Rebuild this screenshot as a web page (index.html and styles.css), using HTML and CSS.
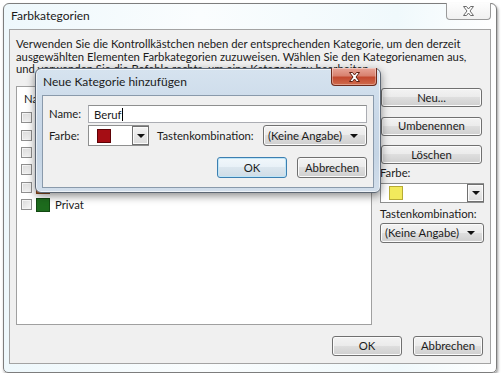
FILE: index.html
```html
<!DOCTYPE html>
<html lang="de">
<head>
    <meta charset="UTF-8">
    <title>Farbkategorien</title>
    <link rel="stylesheet" href="styles.css">
</head>
<body>
    <div class="win">
        <div class="titlebar">
            <span class="title">Farbkategorien</span>
            <div class="close-outer">
                <svg width="11" height="10" viewBox="0 0 11 10"><path d="M0.5 0.5h3l2 2.5 2-2.5h3l-3.5 4.5 3.5 4.5h-3l-2-2.5-2 2.5h-3l3.5-4.5z" fill="#fff" stroke="#6a6a6a" stroke-width="1"/></svg>
            </div>
        </div>

        <div class="client">
            <p class="intro">Verwenden Sie die Kontrollkästchen neben der entsprechenden Kategorie, um den derzeit<br>ausgewählten Elementen Farbkategorien zuzuweisen. Wählen Sie den Kategorienamen aus,<br>und verwenden Sie die Befehle rechts, um eine Kategorie zu bearbeiten.</p>

            <div class="main">
                <div class="list">
                    <div class="list-head">Name</div>
                    <!-- rows under the dialog: only their check boxes show -->
                    <div class="row"><span class="check"></span><span class="swatch blue"></span></div>
                    <div class="row"><span class="check"></span><span class="swatch yellow"></span></div>
                    <div class="row"><span class="check"></span><span class="swatch green"></span></div>
                    <div class="row"><span class="check"></span><span class="swatch purple"></span></div>
                    <div class="row"><span class="check"></span><span class="swatch orange"></span></div>
                    <div class="row"><span class="check"></span><span class="swatch green"></span>Privat</div>
                </div>

                <div class="side">
                    <div class="btn side-btn">Neu...</div>
                    <div class="btn side-btn">Umbenennen</div>
                    <div class="btn side-btn">Löschen</div>
                    <div class="side-label">Farbe:</div>
                    <div class="color-combo wide">
                        <span class="swatch yellow"></span>
                        <span class="drop"><i class="arrow"></i></span>
                    </div>
                    <div class="side-label">Tastenkombination:</div>
                    <div class="btn select wide">(Keine Angabe)<i class="arrow"></i></div>
                </div>
            </div>

            <div class="foot">
                <div class="btn foot-btn">OK</div>
                <div class="btn foot-btn">Abbrechen</div>
            </div>
        </div>

        <!-- modal dialog over the main window -->
        <div class="dialog">
            <div class="dlg-titlebar">
                <span class="title">Neue Kategorie hinzufügen</span>
                <div class="close-red">
                    <svg width="11" height="10" viewBox="0 0 11 10"><path d="M0.5 0.5h3l2 2.5 2-2.5h3l-3.5 4.5 3.5 4.5h-3l-2-2.5-2 2.5h-3l3.5-4.5z" fill="#fff" stroke="#5b1d10" stroke-width="1"/></svg>
                </div>
            </div>
            <div class="panel">
                <div class="field-row first">
                    <span class="lbl">Name:</span>
                    <div class="input">Beruf<span class="caret"></span></div>
                </div>
                <div class="field-row">
                    <span class="lbl">Farbe:</span>
                    <div class="color-combo small">
                        <span class="swatch red"></span>
                        <span class="drop"><i class="arrow"></i></span>
                    </div>
                    <span class="lbl key-lbl">Tastenkombination:</span>
                    <div class="btn select key-select">(Keine Angabe)<i class="arrow"></i></div>
                </div>
                <div class="dlg-buttons">
                    <div class="btn dlg-btn default">OK</div>
                    <div class="btn dlg-btn">Abbrechen</div>
                </div>
            </div>
        </div>
    </div>
</body>
</html>
```

FILE: styles.css
```css
* { margin: 0; padding: 0; box-sizing: border-box; }
body {
    font-family: "Lato", "Segoe UI", sans-serif;
    font-size: 11.3px;
    color: #1b1b1b;
    background: #fff;
}
.win {
    position: relative;
    margin: 3px 0 0 3px;
    width: 494px;
    height: 370px;
    border: 1px solid #7d7d7d;
    border-radius: 6px 6px 5px 5px;
    background: linear-gradient(to right, #eef8fc, #fafdfe 40%, #f0f9fc 80%, #fff);
    padding: 0 5px 8px 5px;
    display: flex;
    flex-direction: column;
    box-shadow: 1px 2px 3px rgba(0,0,0,0.4);
}
.titlebar {
    height: 25px;
    display: flex;
    justify-content: space-between;
    align-items: flex-start;
}
.titlebar .title {
    padding: 5px 0 0 2px;
    line-height: 14px;
    font-size: 12px;
}
.close-outer {
    width: 45px;
    height: 17px;
    margin-top: -1px;
    border: 1px solid #9a9a9a;
    border-top: none;
    border-radius: 0 0 4px 4px;
    background: linear-gradient(#fdfdfd, #f1f1f1);
    display: flex;
    align-items: center;
    justify-content: center;
}
.client {
    flex: 1;
    border: 1px solid #a3a3a3;
    background: #f0f0f0;
    padding: 8px 6px 6px 6px;
    display: flex;
    flex-direction: column;
}
.intro {
    line-height: 12.5px;
    white-space: nowrap;
}
.main {
    display: flex;
    gap: 8px;
    margin-top: 10.5px;
    height: 239px;
}
.list {
    width: 356px;
    border: 1px solid #a0a0a0;
    background: #fff;
}
.list-head {
    height: 22px;
    padding: 5px 0 0 7px;
    line-height: 14px;
}
.row {
    height: 17.4px;
    display: flex;
    align-items: center;
    padding-left: 4px;
    line-height: 14px;
}
.check {
    width: 11px;
    height: 11px;
    border: 1px solid #8f8f8f;
    background: linear-gradient(135deg, #d8d8d8, #f8f8f8);
    box-shadow: inset 0 0 0 1px #f4f4f4;
    margin-right: 4px;
}
.swatch {
    width: 14px;
    height: 14px;
    margin-right: 5px;
    border: 1px solid rgba(0,0,0,0.25);
}
.blue { background: #4a7fd0; }
.yellow { background: #f2ea5c; border-color: #b7ab35; }
.green { background: #1d6b1d; border-color: #124812; }
.purple { background: #7a4fb0; }
.orange { background: #b5622a; }
.red { background: #a50d14; border-color: #5e0206; }

.side {
    width: 104px;
    padding-top: 2px;
    display: flex;
    flex-direction: column;
}
.btn {
    border: 1px solid #707070;
    border-radius: 3px;
    background: linear-gradient(#f3f3f3 0%, #ebebeb 49%, #dedede 50%, #cfcfcf 100%);
    box-shadow: inset 0 0 0 1px #fbfbfb;
    display: flex;
    align-items: center;
    justify-content: center;
    line-height: 14px;
}
.side-btn {
    height: 19px;
    margin: 0 2px 9.5px 1px;
}
.side-btn:nth-child(3) { margin-bottom: 2px; }
.side-label {
    line-height: 14px;
    height: 16.5px;
}
.color-combo {
    display: flex;
    align-items: center;
    background: #fff;
    border: 1px solid #8e8f8f;
    border-right: none;
}
.color-combo .swatch {
    margin-left: 8px;
}
.color-combo .drop {
    margin-left: auto;
    align-self: stretch;
    width: 17px;
    border: 1px solid #707070;
    background: linear-gradient(#f3f3f3, #dcdcdc);
    box-shadow: inset 0 0 0 1px #fbfbfb;
    display: flex;
    align-items: center;
    justify-content: center;
}
.wide {
    width: 104px;
    height: 20px;
    margin-bottom: 4px;
}
.arrow {
    width: 0;
    height: 0;
    border-left: 4px solid transparent;
    border-right: 4px solid transparent;
    border-top: 4px solid #111;
}
.select {
    justify-content: space-between;
    padding: 0 8px 0 4px;
}
.foot {
    margin-top: 11px;
    display: flex;
    justify-content: flex-end;
    gap: 11px;
    padding-right: 1px;
}
.foot-btn {
    width: 70px;
    height: 20px;
}

.dialog {
    position: absolute;
    left: 31px;
    top: 64px;
    width: 346px;
    height: 125px;
    border: 1px solid #5c6673;
    border-radius: 6px;
    padding: 0 6px 4px 6px;
    background: linear-gradient(#d6e3ef, #c9d8e8 40%, #c5d5e5 70%, #d2deeb);
    box-shadow: 0 3px 9px rgba(0,0,0,0.45), inset 0 0 0 1px rgba(255,255,255,0.6);
    display: flex;
    flex-direction: column;
}
.dlg-titlebar {
    position: relative;
    height: 26px;
}
.dlg-titlebar .title {
    display: block;
    padding: 6px 0 0 1px;
    line-height: 14px;
    font-size: 12px;
}
.close-red {
    position: absolute;
    top: -1px;
    right: -3px;
    width: 46px;
    height: 18px;
    border: 1px solid #6d2a1c;
    border-top: none;
    border-radius: 0 0 4px 4px;
    background: linear-gradient(#e8a597 0%, #d88270 45%, #c34a30 55%, #cf6a4c 100%);
    box-shadow: inset 0 0 0 1px rgba(255,255,255,0.35);
    display: flex;
    align-items: center;
    justify-content: center;
}
.panel {
    flex: 1;
    border: 1px solid #8a9aab;
    background: #f0f0f0;
    padding: 9px 6px 0 6px;
}
.field-row {
    display: flex;
    align-items: center;
    height: 21px;
}
.field-row.first {
    height: 18px;
    margin-bottom: 2px;
}
.lbl {
    width: 39px;
    line-height: 14px;
}
.input {
    flex: 1;
    height: 18px;
    border: 1px solid #abadb3;
    border-top-color: #8e8f8f;
    background: #fff;
    padding-left: 5px;
    line-height: 15px;
    display: flex;
    align-items: center;
}
.caret {
    width: 1px;
    height: 13px;
    background: #000;
}
.color-combo.small {
    width: 61px;
    height: 21px;
}
.key-lbl {
    width: auto;
    margin-left: 8px;
    margin-right: 9px;
}
.key-select {
    width: 104px;
    height: 21px;
    margin-left: auto;
}
.dlg-buttons {
    margin-top: 11px;
    display: flex;
    justify-content: flex-end;
    gap: 10px;
}
.dlg-btn {
    width: 70px;
    height: 21px;
}
.dlg-btn.default {
    border-color: #3c7fb1;
    box-shadow: inset 0 0 0 1px #bfe5f7;
    background: linear-gradient(#f1f7fb 0%, #e8f1f7 49%, #dbe6ee 50%, #cfdce6 100%);
}
```
